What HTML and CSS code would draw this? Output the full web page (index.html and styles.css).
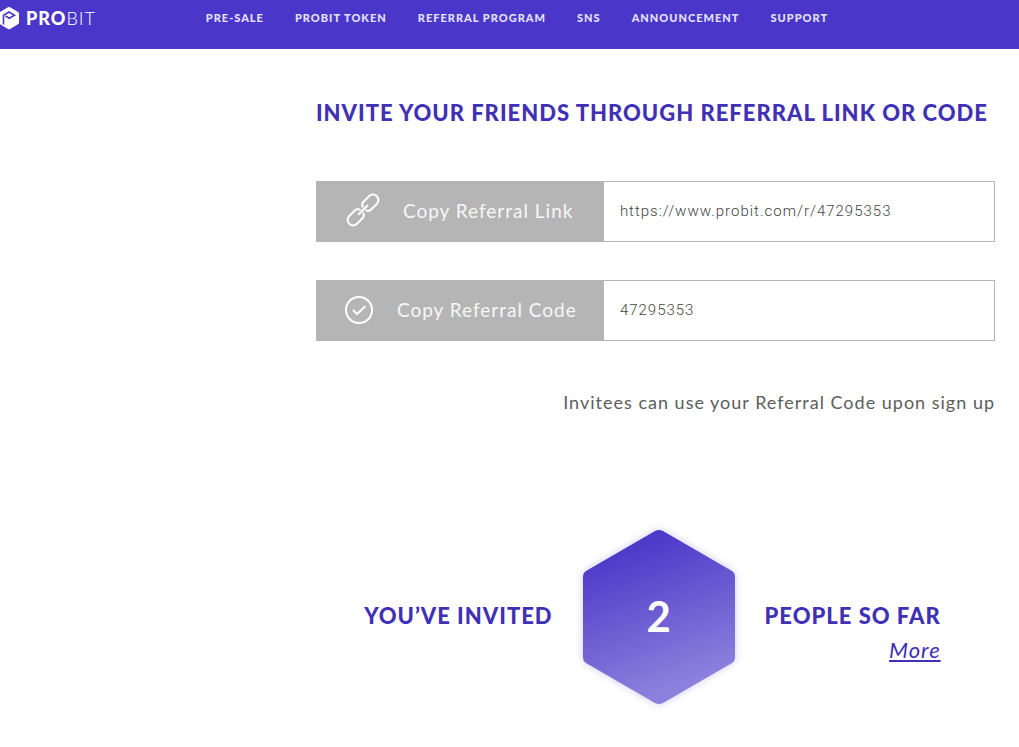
FILE: index.html
```html
<!DOCTYPE html>
<html lang="en">
<head>
<meta charset="utf-8">
<meta name="viewport" content="width=device-width, initial-scale=1">
<title>ProBit Referral Program</title>
<link rel="stylesheet" href="styles.css">
</head>
<body>
<header class="header">
  <a class="logo" href="#">
    <svg class="logo-mark" viewBox="0 0 22 24" aria-hidden="true">
      <path d="M8 1.200Q9 .6 10 1.200L18 5.900Q19 6.500 19 7.600V16.600Q19 17.700 18 18.300L10 23Q9 23.600 8 23L0 18.300V5.900Z" fill="#fff"/>
      <path d="M3.500 18.500V9.300L9 6L14.500 9.200L9.300 12.300L5.500 10" fill="none" stroke="#4a37c9" stroke-width="1.600"/>
    </svg>
    <span class="logo-text"><b>PRO</b>BIT</span>
  </a>
  <nav class="nav">
    <a href="#">PRE-SALE</a>
    <a href="#">PROBIT TOKEN</a>
    <a href="#">REFERRAL PROGRAM</a>
    <a href="#">SNS</a>
    <a href="#">ANNOUNCEMENT</a>
    <a href="#">SUPPORT</a>
  </nav>
</header>
<main class="main">
  <h1 class="title">INVITE YOUR FRIENDS THROUGH REFERRAL LINK OR CODE</h1>
  <div class="copy-row">
    <button class="copy-button" type="button">
      <svg class="icon" viewBox="0 0 36 36" aria-hidden="true">
        <g transform="rotate(-45 18 18)" fill="none" stroke="#fff" stroke-width="2" stroke-linecap="round">
          <path d="M16 15.500Q15 12.500 11.500 12.500H4A5.500 5.500 0 0 0 4 23.500H11.500Q15 23.500 16 20.500"/>
          <path d="M20 15.500Q21 12.500 24.500 12.500H32A5.500 5.500 0 0 1 32 23.500H24.500Q21 23.500 20 20.500"/>
          <path d="M12 18H24"/>
        </g>
      </svg>
      <span>Copy Referral Link</span>
    </button>
    <input class="copy-value" type="text" aria-label="Referral link" value="https://www.probit.com/r/47295353" readonly>
  </div>
  <div class="copy-row">
    <button class="copy-button copy-button-code" type="button">
      <svg class="icon" viewBox="0 0 36 36" aria-hidden="true">
        <g fill="none" stroke="#fff" stroke-width="2">
          <circle cx="18" cy="19" r="13"/>
          <path d="M12 19L16 23L24.500 15"/>
        </g>
      </svg>
      <span>Copy Referral Code</span>
    </button>
    <input class="copy-value" type="text" aria-label="Referral code" value="47295353" readonly>
  </div>
  <p class="note">Invitees can use your Referral Code upon sign up</p>
  <section class="invited">
    <span class="invited-label">YOU’VE INVITED</span>
    <div class="hexagon">
      <svg class="hexagon-shape" viewBox="0 0 152 174" aria-hidden="true">
        <defs>
          <linearGradient id="hex-fill" x1="0.350" y1="0.100" x2="0.600" y2="0.900">
            <stop offset="0" stop-color="#4e3bc9"/>
            <stop offset="1" stop-color="#8b80dc"/>
          </linearGradient>
        </defs>
        <path d="M72 1Q76 -1 80 1L149 41Q152 43 152 47V127Q152 131 149 133L80 173Q76 175 72 173L3 133Q0 131 0 127V47Q0 43 3 41Z" fill="url(#hex-fill)"/>
      </svg>
      <span class="hexagon-count">2</span>
    </div>
    <span class="invited-label">PEOPLE SO FAR</span>
    <a class="more" href="#">More</a>
  </section>
</main>
</body>
</html>
```

FILE: styles.css
```css
* {
  box-sizing: border-box;
}

body {
  margin: 0;
  background: #fff;
  font-family: Lato, "Liberation Sans", sans-serif;
}

.header {
  display: flex;
  align-items: flex-start;
  height: 49px;
  padding-top: 6px;
  background: #4a37c9;
}

.logo {
  display: flex;
  align-items: center;
  gap: 4px;
  width: 20%;
  margin-right: 2px;
  color: #fff;
  text-decoration: none;
}

.logo-mark {
  width: 22px;
  height: 24px;
}

.logo-text {
  font-size: 18px;
  font-weight: 300;
  line-height: 24px;
  letter-spacing: 1px;
}

.logo-text b {
  font-weight: 900;
}

.nav {
  display: flex;
  gap: 31px;
}

.nav a {
  color: #e6e0ff;
  font-size: 11px;
  font-weight: 900;
  line-height: 24px;
  letter-spacing: 1px;
  text-decoration: none;
  white-space: nowrap;
}

.main {
  padding: 50px 24px 40px 31%;
}

.title {
  margin: 0 0 54px;
  color: #3f30b5;
  font-size: 22px;
  font-weight: 900;
  line-height: 28px;
  letter-spacing: 1px;
  white-space: nowrap;
}

.copy-row {
  display: flex;
  height: 61px;
  margin-bottom: 38px;
  border: 1px solid #b5b5b5;
}

.copy-button {
  display: flex;
  align-items: center;
  gap: 22px;
  flex: 0 0 287px;
  padding: 0 0 3px 28px;
  border: 0;
  background: #b5b5b5;
  color: #f7f7f7;
  font-family: inherit;
  font-size: 19px;
  letter-spacing: 1px;
  white-space: nowrap;
}

.copy-button-code {
  padding-left: 24px;
  gap: 20px;
}

.icon {
  width: 36px;
  height: 36px;
}

.copy-value {
  flex: 1;
  min-width: 0;
  padding: 0 16px 2px;
  border: 0;
  background: #fff;
  color: #444;
  font-family: Roboto, "Liberation Sans", sans-serif;
  font-size: 15px;
  font-weight: 300;
  letter-spacing: 1px;
}

.note {
  margin: 47px 0 114px;
  color: #5d5d5d;
  font-size: 18px;
  line-height: 28px;
  letter-spacing: 1px;
  text-align: right;
}

.invited {
  display: grid;
  grid-template-columns: auto 152px auto;
  grid-template-rows: 101px 73px;
  column-gap: 30px;
  justify-content: center;
  padding-right: 6px;
}

.invited-label {
  grid-row: 1;
  align-self: end;
  color: #3f30b5;
  font-size: 22px;
  font-weight: 900;
  line-height: 30px;
  letter-spacing: 1px;
  white-space: nowrap;
}

.hexagon {
  display: grid;
  place-items: center;
  grid-row: 1 / 3;
}

.hexagon-shape,
.hexagon-count {
  grid-area: 1 / 1;
}

.hexagon-shape {
  width: 152px;
  height: 174px;
  overflow: visible;
  filter: drop-shadow(0 0 4px #d0caf3);
}

.hexagon-count {
  z-index: 1;
  color: #fff;
  font-size: 42px;
  font-weight: 700;
  line-height: 48px;
  padding-bottom: 2px;
}

.more {
  grid-column: 3;
  grid-row: 2;
  justify-self: end;
  padding-top: 4px;
  color: #3f30b5;
  font-size: 22px;
  font-style: italic;
  font-weight: 400;
  line-height: 30px;
  letter-spacing: 1px;
}
```
